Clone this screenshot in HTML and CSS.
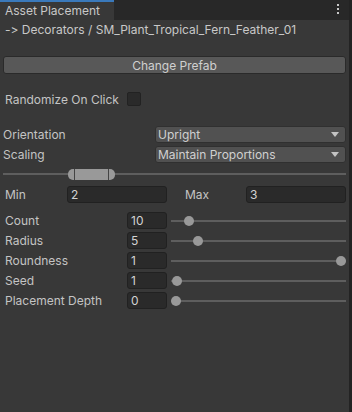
FILE: index.html
```html
<!DOCTYPE html>
<html lang="en">
<head>
    <meta charset="UTF-8">
    <meta name="viewport" content="width=device-width, initial-scale=1.0">
    <title>Asset Placement</title>
    <link rel="stylesheet" href="styles.css">
</head>
<body>
    <div class="window">
        <div class="tabbar">
            <div class="tab">Asset Placement</div>
            <div class="kebab"><span></span><span></span><span></span></div>
        </div>
        <div class="content">
            <div class="path">-&gt; Decorators / SM_Plant_Tropical_Fern_Feather_01</div>
            <button class="btn">Change Prefab</button>

            <div class="row check-row">
                <span class="label wide">Randomize On Click</span>
                <span class="checkbox"></span>
            </div>

            <div class="group">
                <div class="row">
                    <span class="label drop-label">Orientation</span>
                    <div class="dropdown">Upright<span class="arrow"></span></div>
                </div>
                <div class="row">
                    <span class="label drop-label">Scaling</span>
                    <div class="dropdown">Maintain Proportions<span class="arrow"></span></div>
                </div>
            </div>

            <div class="minmax">
                <div class="track"></div>
                <div class="range"><span class="cap"></span><span class="cap"></span></div>
            </div>

            <div class="row minmax-row">
                <span class="label short">Min</span>
                <div class="field mm">2</div>
                <span class="label max-label">Max</span>
                <div class="field mm">3</div>
            </div>

            <div class="group sliders">
                <div class="row">
                    <span class="label wide">Count</span>
                    <div class="field num">10</div>
                    <div class="slider"><div class="track"></div><span class="thumb" style="left: calc(0.079 * (100% - 10px))"></span></div>
                </div>
                <div class="row">
                    <span class="label wide">Radius</span>
                    <div class="field num">5</div>
                    <div class="slider"><div class="track"></div><span class="thumb" style="left: calc(0.133 * (100% - 10px))"></span></div>
                </div>
                <div class="row">
                    <span class="label wide">Roundness</span>
                    <div class="field num">1</div>
                    <div class="slider"><div class="track"></div><span class="thumb" style="left: calc(1 * (100% - 10px))"></span></div>
                </div>
                <div class="row">
                    <span class="label wide">Seed</span>
                    <div class="field num">1</div>
                    <div class="slider"><div class="track"></div><span class="thumb" style="left: calc(0.006 * (100% - 10px))"></span></div>
                </div>
                <div class="row">
                    <span class="label wide">Placement Depth</span>
                    <div class="field num">0</div>
                    <div class="slider"><div class="track"></div><span class="thumb" style="left: calc(0 * (100% - 10px))"></span></div>
                </div>
            </div>
        </div>
    </div>
</body>
</html>
```

FILE: styles.css
```css
body {
    margin: 0;
    background-color: #383838;
    font-family: Inter, "Noto Sans", sans-serif;
    font-size: 12px;
    font-variant-ligatures: none;
    font-feature-settings: "calt" 0, "liga" 0;
    color: #c4c4c4;
}
.window {
    width: 352px;
    height: 412px;
    display: flex;
    flex-direction: column;
    background-color: #383838;
    border-right: 3px solid #232323;
    box-sizing: border-box;
}
.tabbar {
    height: 20px;
    display: flex;
    align-items: stretch;
    justify-content: space-between;
    background-color: #282828;
    flex-shrink: 0;
}
.tab {
    width: 114px;
    box-sizing: border-box;
    padding-left: 5px;
    border-top: 2px solid #3a79bb;
    background-color: #383838;
    color: #c8c8c8;
    line-height: 17px;
}
.kebab {
    display: flex;
    flex-direction: column;
    gap: 2px;
    padding: 4px 10px 0 0;
}
.kebab span {
    width: 2px;
    height: 2px;
    background-color: #c8c8c8;
}
.content {
    padding: 0 3px 0 3px;
    display: flex;
    flex-direction: column;
}
.path {
    height: 20px;
    line-height: 20px;
    padding-left: 2px;
    color: #c8c8c8;
}
.btn {
    margin-top: 16px;
    height: 18px;
    padding: 0;
    border: 1px solid #2a2a2a;
    border-radius: 3px;
    background-color: #585858;
    color: #d0d0d0;
    font-family: inherit;
    font-size: 12px;
    text-align: center;
}
.row {
    display: flex;
    align-items: center;
    height: 17px;
}
.label {
    flex-shrink: 0;
    white-space: nowrap;
}
.wide {
    width: 122px;
    padding-left: 2px;
}
.check-row {
    margin-top: 17px;
    height: 16px;
}
.checkbox {
    width: 14px;
    height: 14px;
    box-sizing: border-box;
    border: 1px solid #222222;
    border-radius: 2px;
    background-color: #2a2a2a;
}
.group {
    margin-top: 19px;
    display: flex;
    flex-direction: column;
    gap: 3px;
}
.drop-label {
    width: 152px;
}
.dropdown {
    flex: 1;
    height: 17px;
    box-sizing: border-box;
    border: 1px solid #303030;
    border-radius: 3px;
    background-color: #515151;
    padding-left: 2px;
    line-height: 15px;
    color: #d0d0d0;
    position: relative;
}
.arrow {
    position: absolute;
    right: 6px;
    top: 5px;
    width: 0;
    height: 0;
    border-left: 4px solid transparent;
    border-right: 4px solid transparent;
    border-top: 5px solid #c4c4c4;
}
.minmax {
    margin-top: 6px;
    height: 11px;
    position: relative;
}
.track {
    position: absolute;
    left: 0;
    right: 0;
    top: 4px;
    height: 2px;
    background-color: #5e5e5e;
}
.range {
    position: absolute;
    left: 65px;
    top: 0;
    width: 47px;
    height: 11px;
    border-radius: 5px;
    background-color: #999999;
    display: flex;
    justify-content: space-between;
    padding: 0 6px;
    box-sizing: border-box;
}
.cap {
    width: 1px;
    height: 11px;
    background-color: #444444;
}
.minmax-row {
    margin-top: 6px;
}
.short {
    width: 62px;
    padding-left: 2px;
}
.max-label {
    width: 61px;
    padding-left: 18px;
}
.field {
    height: 17px;
    box-sizing: border-box;
    border: 1px solid #212121;
    border-radius: 3px;
    background-color: #2a2a2a;
    padding-left: 3px;
    line-height: 15px;
    color: #d2d2d2;
}
.mm {
    width: 100px;
}
.sliders {
    margin-top: 9px;
}
.num {
    width: 40px;
    flex-shrink: 0;
}
.slider {
    flex: 1;
    margin-left: 4px;
    height: 10px;
    position: relative;
}
.slider .track {
    top: 4px;
}
.thumb {
    position: absolute;
    top: 0;
    width: 10px;
    height: 10px;
    border-radius: 50%;
    background-color: #999999;
}
```
